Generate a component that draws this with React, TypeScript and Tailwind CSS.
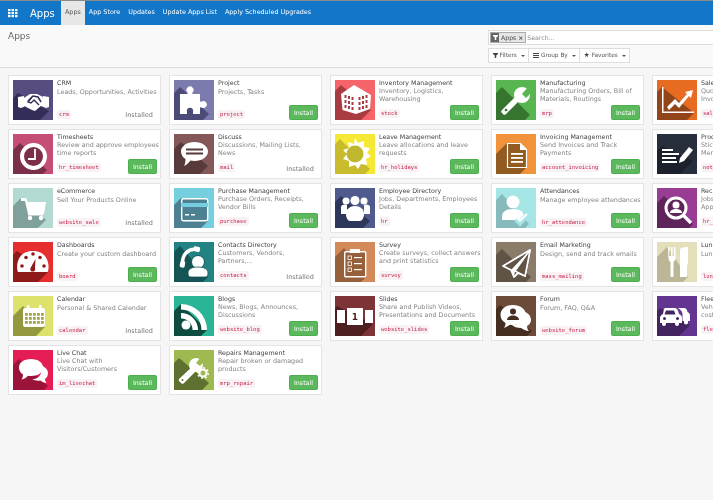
import React from "react";
import { ReactNode } from "react";

const sh = (x0: number, y0: number, x1: number, y1: number) =>
  `${x0},${y0} 0,${y0 + x0} 0,40 ${x1 - (40 - y1)},40 ${x1},${y1}`;

type IconDef = { bg: string; d: string; box: [number, number, number, number]; g: (d: string, bg: string) => ReactNode };

const icons: Record<string, IconDef> = {
  crm: { bg: "#574c80", d: "#332e57", box: [5, 13, 36, 31], g: (d) => (<>
    <path d="M5 17l6-1 2 10-5 2-3-1z" /><path d="M36 17l-6-1-2 10 5 2 3-1z" />
    <path d="M11 18l6-4h7l6 3 -1 8-7 6-3-1-6-3-2-3z" />
    <path d="M15 21l5-5 5 1 3 5" fill="none" stroke={d} strokeWidth="1.5" /><path d="M19 17l-4 5 3 1 3-3 5 5" fill="none" stroke={d} strokeWidth="1.4" />
  </>) },
  project: { bg: "#7c7bad", d: "#4c4a77", box: [6, 7, 35, 34], g: () => (<>
    <path d="M6 14h7c1 0 1-1 .5-1.500a3.500 3.500 0 1 1 5 0c-.5.500-.5 1.500.5 1.500h7v7c0 1 1 1 1.500.5a3.500 3.500 0 1 1 0 6c-.5-.5-1.500-.5-1.500.5v6h-7v-2a3.200 3.200 0 1 0-6 0v2H6z" />
  </>) },
  stock: { bg: "#f4646a", d: "#a83c41", box: [6, 5, 36, 30], g: (d) => (<>
    <path d="M19 5L6 14l1.500 16L21 34l14-5 1-14z" />
    {[9.500, 13, 16.500].map((x, i) => [15 + i, 20 + i, 25 + i].map((y) => <rect key={x + "-" + y} x={x} y={y} width="2" height="3" fill={d} />))}
    {[23.500, 27, 30.500].map((x, i) => [17 - i, 22 - i, 27 - i].map((y) => <rect key={x + "-" + y} x={x} y={y} width="2" height="3" fill={d} />))}
  </>) },
  mrp: { bg: "#58b54f", d: "#35752f", box: [6, 7, 34, 35], g: (d, bg) => (<>
    <path d="M6 30l16-16 4 4-16 16a2 2 0 0 1-3 0l-1-1a2 2 0 0 1 0-3z" />
    <circle cx="26" cy="15" r="8" /><path d="M26 14l6-7 4 5-6 6z" fill={bg} /><circle cx="10" cy="30" r="1.300" fill={d} />
  </>) },
  sale: { bg: "#e76c22", d: "#93451a", box: [5, 7, 37, 33], g: () => (<>
    <path d="M5 7h1.500v24.500H37V33H5z" /><path d="M10 27l8-8 4 4 8-9-2-2 8-2-2 8-2-2-10 12-4-4-6 6z" />
  </>) },
  hr_timesheet: { bg: "#c44e76", d: "#7c2f4a", box: [7, 9, 34, 36], g: (d) => (<>
    <circle cx="20.500" cy="22.500" r="11.500" fill={d} stroke="#fff" strokeWidth="4" /><path d="M22 15v10h-7" fill="none" stroke="#fff" strokeWidth="1.800" />
  </>) },
  mail: { bg: "#845859", d: "#583a3b", box: [7, 8, 34, 32], g: (d) => (<>
    <path d="M20.500 8c7.500 0 13.500 4.200 13.500 9.500S28 27 20.500 27c-1.500 0-3-.2-4-.5-1.500 2-4 4.500-6.500 5.500 1-2 1.500-4 1.500-7C9 23.500 7 20.800 7 17.500 7 12.200 13 8 20.500 8z" />
    <rect x="12" y="14.500" width="17" height="2" fill={d} /><rect x="12" y="18.500" width="17" height="2" fill={d} />
  </>) },
  hr_holidays: { bg: "#f5e935", d: "#c9bc2c", box: [5, 5, 35, 35], g: () => (<>
    <path d="M20 4l3 5 6-2 0 6 6 1-3 5 4 3-5 3 1 6-6-1-3 5-3-4-6 2 0-6-6-2 4-5-4-4 6-2-1-6 6 2z" />
    <circle cx="20" cy="20" r="8.500" fill="#bfb72d" />
  </>) },
  account_invoicing: { bg: "#f1933b", d: "#915b21", box: [11, 9, 31, 33], g: (d) => (<>
    <path d="M11.500 9.500h13l6 6v18h-19z" fill={d} stroke="#fff" strokeWidth="1.200" /><path d="M24 9v7h7z" />
    {[19, 23, 27].map((y) => <rect key={y} x="15" y={y} width="12" height="1.800" />)}
  </>) },
  note: { bg: "#272e3c", d: "#1b202c", box: [5, 12, 36, 27], g: () => (<>
    <rect x="5" y="15" width="11" height="2" /><rect x="5" y="19" width="17" height="2" /><rect x="5" y="23" width="14" height="2" /><rect x="5" y="27" width="15" height="2" />
    <path d="M23 24l9-11 4 3-9 11-5 2z" />
  </>) },
  website_sale: { bg: "#b2dad2", d: "#80a19b", box: [8, 10, 33, 32], g: () => (<>
    <path d="M8 10h5l2 4h18l-2 12H15l-3-13H8z" /><circle cx="17" cy="30" r="2.200" /><circle cx="28" cy="30" r="2.200" /><path d="M15 26h15v1.500H15z" />
  </>) },
  purchase: { bg: "#75cfde", d: "#4d8090", box: [7, 10, 34, 33], g: (d) => (<>
    <rect x="7.700" y="10.700" width="26" height="22" rx="2" fill={d} stroke="#fff" strokeWidth="1.400" /><rect x="7" y="15" width="27" height="4" fill="#75cfde" />
    <rect x="11" y="26" width="4" height="1.500" /><rect x="17" y="26" width="4" height="1.500" />
  </>) },
  hr: { bg: "#4f5a8d", d: "#2d3759", box: [6, 8, 35, 33], g: () => (<>
    <circle cx="11" cy="13" r="3.500" /><circle cx="29" cy="13" r="3.500" /><circle cx="20" cy="12.500" r="4.500" />
    <path d="M6 19c0-2 3-3 6-2v9H6z" /><path d="M35 19c0-2-3-3-6-2v9h6z" /><path d="M11 26c0-5 4-8 9-8s9 3 9 8c0 4-2 7-4 7H15c-2 0-4-3-4-7z" />
  </>) },
  hr_attendance: { bg: "#a6e5e5", d: "#86babd", box: [6, 6, 33, 36], g: () => (<>
    <circle cx="17" cy="14" r="6.500" /><path d="M6 29c0-6 5-8 11-8s11 2 11 8v3H6z" /><path d="M20 31l4 4 8-9" fill="none" stroke="#a6e5e5" strokeWidth="5" /><path d="M21 30l3 3 7-7" fill="none" stroke="#fff" strokeWidth="1.800" />
  </>) },
  hr_recruitment: { bg: "#993d94", d: "#5f2459", box: [7, 8, 36, 36], g: (d) => (<>
    <circle cx="19" cy="20" r="10" fill={d} stroke="#fff" strokeWidth="3" /><circle cx="19" cy="17" r="3.500" /><path d="M13 25c0-3 3-4 6-4s6 1 6 4z" /><path d="M26 27l8 8" stroke="#fff" strokeWidth="3.200" />
  </>) },
  board: { bg: "#e62e2e", d: "#8f1a1a", box: [4, 9, 35, 30], g: (d) => (<>
    <path d="M5 30C3 26 3 9 20 9c16 0 17 17 14.500 21z" />
    {[[9, 24], [13, 15.500], [20, 12], [27, 15.500], [31, 24]].map(([x, y]) => <circle key={x} cx={x} cy={y} r="1.800" fill={d} />)}
    <path d="M17.500 26l5-9-.5 9a2.500 2.500 0 1 1-4.500 0z" fill={d} />
  </>) },
  contacts: { bg: "#218383", d: "#145455", box: [6, 4, 34, 35], g: (d) => (<>
    <path d="M23 7.500C14 6 8 13 8.500 22" fill="none" stroke="#fff" strokeWidth="3.500" />
    <rect x="19.500" y="4.500" width="6.500" height="5" rx="1.500" transform="rotate(10 22 7)" /><rect x="6" y="19" width="5" height="6.500" rx="1.500" transform="rotate(10 8 22)" />
    <circle cx="24" cy="20" r="6.500" stroke={d} strokeWidth="1" /><path d="M14 31c0-4 4-6 10-6s10 2 10 6c0 3-1 4-3 4H17c-2 0-3-1-3-4z" stroke={d} strokeWidth=".8" />
  </>) },
  survey: { bg: "#d18a58", d: "#96603a", box: [9, 6, 31, 35], g: (d) => (<>
    <rect x="9.700" y="9.700" width="21" height="25" rx="1" fill={d} stroke="#fff" strokeWidth="1.400" /><rect x="15" y="7" width="10" height="4" />
    {[14, 20, 26].map((y) => <g key={y}><rect x="13" y={y} width="3.500" height="3.500" fill="none" stroke="#fff" strokeWidth=".8" /><rect x="19" y={y + 1} width="8" height="1.200" /></g>)}
  </>) },
  mass_mailing: { bg: "#8b7b69", d: "#5f5446", box: [6, 7, 35, 35], g: (d) => (<>
    <path d="M34 8L7 24l8 4 3 7 4-4 7 3z" fill={d} stroke="#fff" strokeWidth="1.800" strokeLinejoin="round" /><path d="M33 9L15 28l3 7 1-6z" fill="#fff" /><path d="M19 29l10 5L34 8z" fill={d} stroke="#fff" strokeWidth="1.400" />
  </>) },
  lunch: { bg: "#e3dfba", d: "#bab696", box: [10, 5, 31, 35], g: () => (<>
    <path d="M11 5h1.500v9h1.500V5h1.500v9H17V5h1.500v11c0 2-1 3-2 4v15h-3V20c-1-1-2-2-2-4z" /><path d="M23 35V8c0-2 2-3 8-3v15l-1 5v10z" />
  </>) },
  calendar: { bg: "#dce26b", d: "#94983f", box: [10, 10, 32, 31], g: () => (<>
    <rect x="10" y="12" width="22" height="19" rx="2" /><rect x="14" y="9" width="2.500" height="5" rx="1" /><rect x="26" y="9" width="2.500" height="5" rx="1" />
    {[17, 21, 25].map((y) => [12, 16, 20, 24, 28].map((x) => <rect key={x + "-" + y} x={x} y={y} width="2.800" height="2.800" fill="#a3a648" />))}
  </>) },
  website_blog: { bg: "#2ab597", d: "#0e4b40", box: [7, 8, 33, 34], g: () => (<>
    <circle cx="12" cy="29" r="4.500" /><path d="M7 17a17 17 0 0 1 17 17h-5.500A11.500 11.500 0 0 0 7 22.500z" /><path d="M7 8a26 26 0 0 1 26 26h-5.500A20.500 20.500 0 0 0 7 13.500z" />
  </>) },
  website_slides: { bg: "#7e3337", d: "#4f1e21", box: [2, 10, 38, 28], g: (d) => (<>
    <rect x="2" y="14" width="8" height="13" /><rect x="30" y="14" width="8" height="13" /><rect x="12" y="12" width="16" height="17" />
    <text x="20" y="24" textAnchor="middle" fontSize="9" fontWeight="700" fill={d} fontFamily="'DejaVu Sans',sans-serif">1</text>
  </>) },
  website_forum: { bg: "#6c4b39", d: "#452d20", box: [4, 9, 36, 35], g: (d) => (<>
    <path d="M26 15c5 1 9 4 9 9 0 3-2 5-4 6 0 2 1 4 2 5-3 0-6-2-8-3-4 0-7-1-9-3 8 0 14-5 10-14z" />
    <path d="M17 9c7 0 13 4 13 10s-6 10-13 10c-1 0-2 0-3-.3C12 30 10 31 8 32c1-1.500 1.500-3 1.500-5C6 25 4.500 22 4.500 19 4.500 13 10 9 17 9z" />
    <circle cx="17" cy="15.500" r="3" fill={d} /><path d="M11 24c0-3 3-4.500 6-4.500s6 1.500 6 4.500z" fill={d} />
  </>) },
  fleet: { bg: "#643491", d: "#432360", box: [3, 12, 33, 29], g: (d) => (<>
    <path d="M21 12h6c2 0 3 1.500 3.500 4 2 .8 2.500 2 2.500 4v5h-2v1.500a2 2 0 0 1-4 0V25h-1.500v-7c0-2-1.500-4-4.500-6z" />
    <path d="M8 12h10c2 0 3 2 4 6 2 1 3 2 3 4v5h-3v1a2 2 0 0 1-4 0v-1H9v1a2 2 0 0 1-4 0v-1H3v-5c0-2 1-3 3-4 .8-4 .8-6 2-6z" />
    <path d="M9 14.500h8l1.500 4H7.500z" fill={d} /><circle cx="7.500" cy="22.500" r="1.500" fill={d} /><circle cx="20.500" cy="22.500" r="1.500" fill={d} />
  </>) },
  im_livechat: { bg: "#e61c55", d: "#9b1339", box: [6, 9, 35, 36], g: () => (<>
    <path d="M27 15c4 1 8 4 8 8 0 2.500-1 4.500-3 6 0 2 1 3 1.500 4-2.500 0-4.500-1-6-2.500-3 .5-6 0-8-1 8-1 11-8 7.500-14.500z" />
    <path d="M18 9c7 0 12 3.500 12 8.500S25 26 18 26c-1 0-2 0-3-.2C13 28 11 29 8.500 29.500c1-1.500 1.500-3 1.500-5C7.500 23 6 20.500 6 17.500 6 12.500 11 9 18 9z" />
  </>) },
  mrp_repair: { bg: "#9db94f", d: "#5f7130", box: [5, 8, 35, 33], g: (d, bg) => (<>
    <path d="M5 29l14-13 4 4-13 13a2 2 0 0 1-3 0l-2-2a2 2 0 0 1 0-2z" /><circle cx="22" cy="15" r="7" /><path d="M22 13l5-6 4 4-5 5z" fill={bg} />
    <circle cx="29" cy="23" r="3.500" fill="none" stroke="#fff" strokeWidth="2" /><circle cx="29" cy="23" r="5.200" fill="none" stroke="#fff" strokeWidth="1.500" strokeDasharray="2 2" /><circle cx="8.500" cy="30" r="1" fill={d} />
  </>) },
};

function AppIcon({ name }: { name: string }) {
  const ic = icons[name];
  const [a, b, c, e] = ic.box;
  return (
    <svg width="40" height="40" viewBox="0 0 40 40" fill="#fff" className="shrink-0 block">
      <rect width="40" height="40" fill={ic.bg} />
      <polygon points={sh(a, b, c, e)} fill={ic.d} />
      {ic.g(ic.d, ic.bg)}
    </svg>
  );
}

type App = [string, string, string, boolean?];
const apps: App[] = [
  ["CRM", "Leads, Opportunities, Activities", "crm", true],
  ["Project", "Projects, Tasks", "project"],
  ["Inventory Management", "Inventory, Logistics,\nWarehousing", "stock"],
  ["Manufacturing", "Manufacturing Orders, Bill of\nMaterials, Routings", "mrp"],
  ["Sales", "Quotations, Sales Orders,\nInvoicing", "sale"],
  ["Timesheets", "Review and approve employees\ntime reports", "hr_timesheet"],
  ["Discuss", "Discussions, Mailing Lists,\nNews", "mail", true],
  ["Leave Management", "Leave allocations and leave\nrequests", "hr_holidays"],
  ["Invoicing Management", "Send Invoices and Track\nPayments", "account_invoicing"],
  ["Productivity", "Sticky notes, Collaborative,\nMemos", "note"],
  ["eCommerce", "Sell Your Products Online", "website_sale", true],
  ["Purchase Management", "Purchase Orders, Receipts,\nVendor Bills", "purchase"],
  ["Employee Directory", "Jobs, Departments, Employees\nDetails", "hr"],
  ["Attendances", "Manage employee attendances", "hr_attendance"],
  ["Recruitment Process", "Jobs, Recruitment,\nApplications", "hr_recruitment"],
  ["Dashboards", "Create your custom dashboard", "board"],
  ["Contacts Directory", "Customers, Vendors,\nPartners,...", "contacts", true],
  ["Survey", "Create surveys, collect answers\nand print statistics", "survey"],
  ["Email Marketing", "Design, send and track emails", "mass_mailing"],
  ["Lunch", "Lunch Order, Meal, Food", "lunch"],
  ["Calendar", "Personal & Shared Calendar", "calendar", true],
  ["Blogs", "News, Blogs, Announces,\nDiscussions", "website_blog"],
  ["Slides", "Share and Publish Videos,\nPresentations and Documents", "website_slides"],
  ["Forum", "Forum, FAQ, Q&A", "website_forum"],
  ["Fleet Management", "Vehicle, leasing, insurances,\ncosts", "fleet"],
  ["Live Chat", "Live Chat with\nVisitors/Customers", "im_livechat"],
  ["Repairs Management", "Repair broken or damaged\nproducts", "mrp_repair"],
];

function Card({ app }: { app: App }) {
  const [title, desc, mod, installed] = app;
  const two = desc.includes("\n");
  return (
    <div className="flex h-[50px] gap-[4px] border border-[#e4e4e4] bg-white py-1 pl-1 pr-[3px]">
      <AppIcon name={mod} />
      <div className="flex h-[40px] min-w-0 flex-1 flex-col justify-between">
        <div>
          <div className="mt-[-2px] whitespace-nowrap text-[6.300px] leading-[9px] text-[#3f3f3f]">{title}</div>
          <div className={`whitespace-pre text-[6.400px] leading-[8px] text-[#858585] ${two ? "" : "mt-px"}`}>{desc}</div>
        </div>
        <div className="flex items-end justify-between">
          <code className={`rounded-[2px] bg-[#f9f2f4] px-[2px] font-['DejaVu_Sans_Mono',monospace] text-[5.500px] leading-[9px] text-[#c7254e] ${two ? "mb-[2.500px]" : "mb-[1.500px]"}`}>{mod}</code>
          {installed ? (
            <span className="mr-[4px] text-[6.500px] leading-[10px] text-[#777]">Installed</span>
          ) : (
            <button className="h-[15px] w-[29px] rounded-[1.500px] border border-[#4cae4c] bg-[#5cb85c] text-center text-[6.300px] leading-[12px] text-white">Install</button>
          )}
        </div>
      </div>
    </div>
  );
}

function Caret() {
  return <span className="ml-[2px] inline-block h-0 w-0 border-x-[2px] border-t-[2px] border-x-transparent border-t-[#555] align-middle" />;
}

function ToolBtn({ icon, label }: { icon: ReactNode; label: string }) {
  return (
    <button className="flex h-[13px] items-center gap-[2px] border-r border-[#ddd] bg-white px-[3.500px] text-[5.800px] text-[#555] last:border-r-0">
      {icon}
      {label}
      <Caret />
    </button>
  );
}

const Funnel = ({ c = "#444", s = 5 }: { c?: string; s?: number }) => (
  <svg width={s} height={s} viewBox="0 0 10 10"><path d="M0 0h10v2L6.500 5v5h-3V5L0 2z" fill={c} /></svg>
);

export default function App() {
  const nav = ["App Store", "Updates", "Update Apps List", "Apply Scheduled Upgrades"];
  return (
    <div className="h-[500px] w-[713px] overflow-hidden bg-[#f6f6f6] font-['DejaVu_Sans',sans-serif] blur-[0.3px]">
      <nav className="flex h-[25px] items-stretch border-t border-[#8a8a8a] bg-[#1277c9] pl-2 text-white">
        <div className="flex items-center">
          <svg width="10" height="9" viewBox="0 0 10 9" fill="#fff">
            {[0, 3.500, 7].map((x) => [0, 3, 6].map((y) => <rect key={x + "-" + y} x={x} y={y} width="2.500" height="2.200" />))}
          </svg>
        </div>
        <div className="ml-3 flex w-[31px] items-center text-[10px] font-medium">Apps</div>
        <div className="flex items-center bg-[#e7e7e7] px-1 text-[6.400px] text-[#555]">Apps</div>
        <div className="flex items-center">
          {nav.map((n) => (
            <span key={n} className="px-1 text-[6.400px] font-medium">{n}</span>
          ))}
        </div>
      </nav>
      <header className="flex h-[43px] border-b border-[#ddd] bg-[#f9f9f9]">
        <div className="flex-1 pl-2 pt-[5px] text-[9px] leading-[12px] text-[#666]">Apps</div>
        <div className="w-[225px] shrink-0 pt-[5px]">
          <div className="flex h-[15px] w-[240px] items-center gap-[1px] border border-[#ddd] bg-white pl-[1px]">
            <div className="flex h-[11px] items-stretch border border-[#aaa] bg-[#e6e6e6]">
              <span className="flex w-[8px] items-center justify-center bg-[#666]"><Funnel c="#fff" /></span>
              <span className="flex items-center gap-[2px] px-[2px] text-[6.200px] text-[#444]">Apps<span className="text-[6px] font-bold leading-none">×</span></span>
            </div>
            <span className="text-[6.200px] text-[#888]">Search...</span>
          </div>
          <div className="mt-[3px] flex w-fit border border-[#ddd] bg-white">
            <ToolBtn icon={<Funnel />} label="Filters" />
            <ToolBtn icon={<svg width="6" height="5" viewBox="0 0 6 5" fill="#444"><rect width="6" height="1" /><rect y="2" width="6" height="1" /><rect y="4" width="6" height="1" /></svg>} label="Group By" />
            <ToolBtn icon={<span className="text-[6.500px] leading-none text-[#444]">★</span>} label="Favorites" />
          </div>
        </div>
      </header>
      <main className="grid w-[813px] grid-cols-[repeat(5,153px)] gap-x-2 gap-y-1 pl-2 pt-[7px]">
        {apps.map((a) => <Card key={a[2]} app={a} />)}
      </main>
    </div>
  );
}
